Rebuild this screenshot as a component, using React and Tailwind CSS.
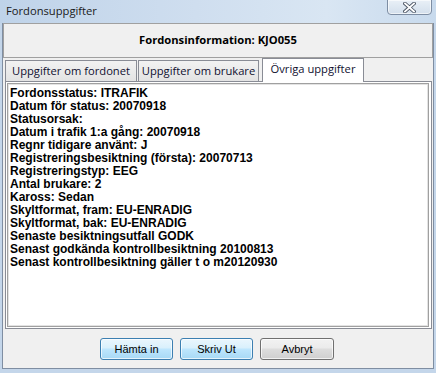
export default function App() {
  const lines = [
    "Fordonsstatus: ITRAFIK",
    "Datum för status: 20070918",
    "Statusorsak:",
    "Datum i trafik 1:a gång: 20070918",
    "Regnr tidigare använt: J",
    "Registreringsbesiktning (första): 20070713",
    "Registreringstyp: EEG",
    "Antal brukare: 2",
    "Kaross: Sedan",
    "Skyltformat, fram: EU-ENRADIG",
    "Skyltformat, bak: EU-ENRADIG",
    "Senaste besiktningsutfall GODK",
    "Senast godkända kontrollbesiktning 20100813",
    "Senast kontrollbesiktning gäller t o m20120930",
  ];
  const seg = "font-['Open_Sans','Noto_Sans',sans-serif]";
  const blueBtn =
    "w-[73px] h-[22px] rounded-[3px] border border-[#3c7fb1] bg-[linear-gradient(to_bottom,#eaf6fd_0%,#d9f0fc_45%,#bee6fd_50%,#a7d9f5_100%)] shadow-[inset_0_0_0_1px_rgba(255,255,255,0.7)] flex items-center justify-center text-[11px] text-black font-['Liberation_Sans',sans-serif]";
  const grayBtn =
    "w-[74px] h-[22px] rounded-[3px] border border-[#707070] bg-[linear-gradient(to_bottom,#f2f2f2_0%,#ebebeb_45%,#dddddd_50%,#cfcfcf_100%)] shadow-[inset_0_0_0_1px_rgba(255,255,255,0.7)] flex items-center justify-center text-[11px] text-black font-['Liberation_Sans',sans-serif]";
  return (
    <div className="relative w-[436px] h-[373px] overflow-hidden bg-[#c4d6ea] flex flex-col">
      <div className="h-[23px] shrink-0 bg-[linear-gradient(to_right,#bfd3e9_0%,#cfdeef_45%,#d9e6f3_75%,#c8daed_100%)]">
        <div className={`pl-[6px] pt-[2px] text-[11.2px] leading-[17px] text-[#1a1a1a] ${seg}`}>
          Fordonsuppgifter
        </div>
      </div>
      <div className="absolute top-[-1px] left-[387px] w-[45px] h-[16px] rounded-b-[4px] border border-[#7d8da3] bg-[linear-gradient(to_bottom,#e9f0f7,#d3dfec)] shadow-[inset_0_0_0_1px_rgba(255,255,255,0.6)] flex items-center justify-center">
        <svg width="13" height="11" viewBox="0 0 13 11">
          <path d="M2 1.5 L11 9.5 M11 1.5 L2 9.5" stroke="#4b5564" strokeWidth="3.6" strokeLinecap="square" />
          <path d="M2 1.5 L11 9.5 M11 1.5 L2 9.5" stroke="#ffffff" strokeWidth="1.8" strokeLinecap="square" />
        </svg>
      </div>
      <div className="mx-[2px] h-[346px] border-x border-b border-[#7f8ea2] bg-[#f0f0f0] flex flex-col">
        <div className="h-[35px] shrink-0 border border-[#a0a0a0] flex items-center justify-center">
          <span className={`text-[11.2px] font-bold text-black ${seg}`}>Fordonsinformation: KJO055</span>
        </div>
        <div className={`h-[23px] shrink-0 flex items-end pl-[2px] text-[11.2px] whitespace-nowrap ${seg}`}>
          <div className="w-[132px] h-[21px] border border-b-0 border-[#898c95] bg-[linear-gradient(to_bottom,#f2f2f2,#e3e3e3)] flex items-center justify-center text-[#101030]">
            Uppgifter om fordonet
          </div>
          <div className="ml-[1px] w-[121px] h-[21px] border border-b-0 border-[#898c95] bg-[linear-gradient(to_bottom,#f2f2f2,#e3e3e3)] flex items-center justify-center text-[#101030]">
            Uppgifter om brukare
          </div>
          <div className="relative z-10 -mb-px ml-[3px] w-[102px] h-[24px] border border-b-0 border-[#898c95] bg-white flex items-center justify-center pb-[3px] text-[#101030]">
            Övriga uppgifter
          </div>
        </div>
        <div className="ml-[2px] mr-[1px] h-[248px] shrink-0 border border-[#898c95] bg-white pl-[1px] pt-[1px] pr-[2px] pb-[1px]">
          <div className="h-full border border-[#a0a0a0] shadow-[inset_0_0_0_1px_#e3e3e3] pl-[2px] pt-[3px]">
            <div className="font-['Liberation_Sans',sans-serif] font-bold text-[12px] leading-[13px] text-black">
              {lines.map((l) => (
                <div key={l} className="whitespace-pre">{l}</div>
              ))}
            </div>
          </div>
        </div>
        <div className="mt-[9px] h-[22px] flex justify-center gap-[7px] pr-[2px]">
          <div className={blueBtn}>Hämta in</div>
          <div className={blueBtn}>Skriv Ut</div>
          <div className={grayBtn}>Avbryt</div>
        </div>
      </div>
    </div>
  );
}
